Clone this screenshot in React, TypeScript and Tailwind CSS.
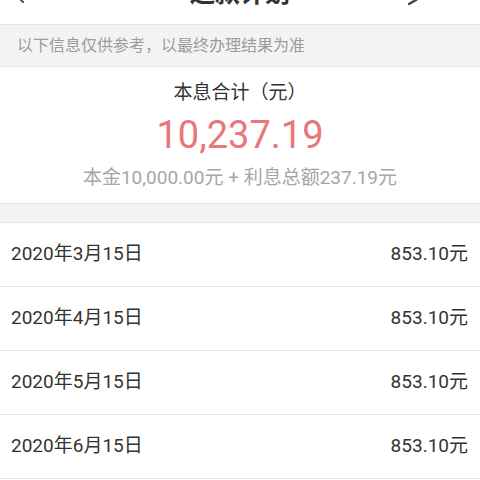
import React from "react";

const schedule = [
  { date: "2020年3月15日", amount: "853.10元" },
  { date: "2020年4月15日", amount: "853.10元" },
  { date: "2020年5月15日", amount: "853.10元" },
  { date: "2020年6月15日", amount: "853.10元" },
];

const font = "font-['Roboto','Noto_Sans_CJK_SC',sans-serif]";

// ── Header (scrolled partly off the top) ───────────────────────────
function Header() {
  return (
    <div className="relative -mt-[36px] h-[61px] border-b border-[#e3e3e3] bg-white flex items-center justify-center">
      <svg className="absolute left-[8px] top-[19px]" width="22" height="22" viewBox="0 0 22 22" fill="none">
        <path d="M15 3 L7 11 L15 19" stroke="#555" strokeWidth="2.2" strokeLinecap="round" strokeLinejoin="round" />
      </svg>
      <span className="text-[25px] font-bold leading-[30px] text-[#333]">还款计划</span>
      <svg className="absolute left-[398px] top-[18px]" width="24" height="24" viewBox="0 0 24 24" fill="none">
        <path d="M18 6 A7 7 0 0 1 18 18 L11 22" stroke="#444" strokeWidth="2.4" strokeLinecap="round" />
      </svg>
    </div>
  );
}

export default function App() {
  return (
    <div className={`w-[480px] h-[480px] overflow-hidden bg-white ${font}`}>
      <Header />

      {/* Notice */}
      <div className="h-[42px] bg-[#f3f3f4] border-b border-[#e6e6e6] flex items-center px-[17px]">
        <span className="text-[16px] text-[#9b9b9b]">以下信息仅供参考，以最终办理结果为准</span>
      </div>

      {/* Summary */}
      <div className="flex flex-col items-center pt-[14px] pb-[13px]">
        <p className="text-[19px] leading-[24px] text-[#333]">本息合计（元）</p>
        <p className="mt-[8px] text-[38px] leading-[44px] text-[#e8777a]">10,237.19</p>
        <p className="mt-[9px] text-[19px] leading-[24px] text-[#a6a6a6]">本金10,000.00元 + 利息总额237.19元</p>
      </div>

      <div className="h-[20px] bg-[#f3f3f4] border-y border-[#e6e6e6]" />

      {/* Repayment rows */}
      <div className="flex flex-col">
        {schedule.map((row) => (
          <div
            key={row.date}
            className="h-[64px] flex items-center justify-between pl-[11px] pr-[12px] border-b border-[#e6e6e6]"
          >
            <span className="text-[19px] text-[#333]">{row.date}</span>
            <span className="text-[19px] text-[#333]">{row.amount}</span>
          </div>
        ))}
      </div>
    </div>
  );
}
